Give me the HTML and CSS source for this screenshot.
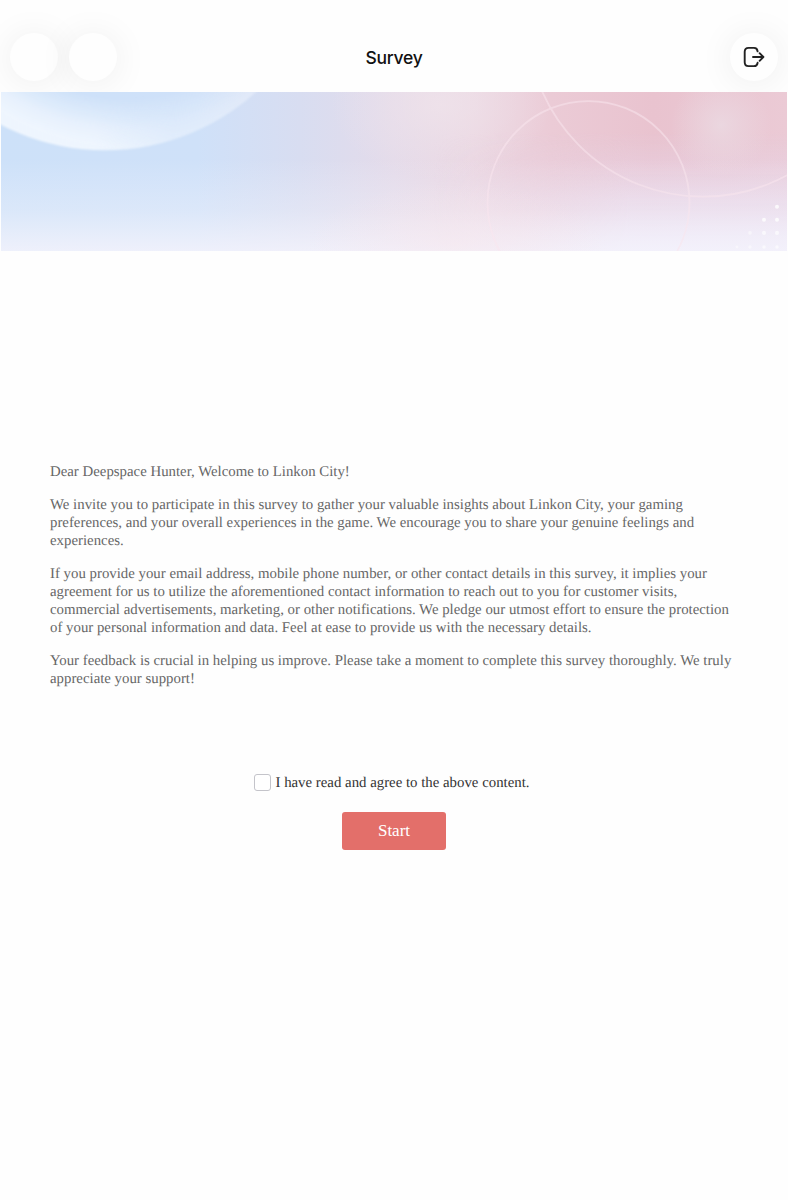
FILE: index.html
```html
<!DOCTYPE html>
<html lang="en">
<head>
    <meta charset="UTF-8">
    <meta name="viewport" content="width=device-width, initial-scale=1.0">
    <title>Survey</title>
    <link rel="stylesheet" href="styles.css">
</head>
<body>
<header class="topbar">
    <div class="nav-left">
        <button type="button" class="round-btn" aria-label="Back"></button>
        <button type="button" class="round-btn" aria-label="Forward"></button>
    </div>
    <h1>Survey</h1>
    <div class="nav-right">
        <button type="button" class="round-btn" aria-label="Exit">
            <svg class="exit-icon" viewBox="0 0 24 24" width="24" height="24">
                <path d="M15.6 6.4C15.4 4.2 14.2 2.9 12 2.9H6.6Q2.7 2.9 2.7 6.8V17.2Q2.7 21.1 6.6 21.1H12C14.2 21.1 15.4 19.8 15.6 17.8"/>
                <path d="M11 12H21.3M17.6 8.2L21.4 12L17.6 15.8"/>
            </svg>
        </button>
    </div>
</header>

<svg class="banner" viewBox="0 0 786 158" preserveAspectRatio="none">
    <defs>
        <linearGradient id="sky" x1="0" x2="1" y1="0" y2="0">
            <stop offset="0" stop-color="#cde1f9"/>
            <stop offset="0.25" stop-color="#cfe1f9"/>
            <stop offset="0.38" stop-color="#d8ddf1"/>
            <stop offset="0.5" stop-color="#e4dbea"/>
            <stop offset="0.6" stop-color="#ebd7e2"/>
            <stop offset="0.7" stop-color="#ebcbd6"/>
            <stop offset="0.83" stop-color="#e9c3cf"/>
            <stop offset="1" stop-color="#ebcad5"/>
        </linearGradient>
        <linearGradient id="lilac" x1="0" x2="0" y1="0" y2="1">
            <stop offset="0.25" stop-color="#e6d3e6" stop-opacity="0"/>
            <stop offset="0.7" stop-color="#e8d8ea" stop-opacity="0.85"/>
            <stop offset="1" stop-color="#ece5f6"/>
        </linearGradient>
        <linearGradient id="fade" x1="0" x2="0" y1="0" y2="1">
            <stop offset="0.42" stop-color="#f4f4fc" stop-opacity="0"/>
            <stop offset="0.75" stop-color="#f4f4fb" stop-opacity="0.35"/>
            <stop offset="1" stop-color="#f4f3fc" stop-opacity="0.85"/>
        </linearGradient>
        <linearGradient id="sideways" x1="0" x2="1" y1="0" y2="0">
            <stop offset="0.55" stop-color="#000"/>
            <stop offset="0.8" stop-color="#fff"/>
        </linearGradient>
        <mask id="rightSide"><rect width="786" height="158" fill="url(#sideways)"/></mask>
        <radialGradient id="bubble" gradientUnits="userSpaceOnUse" cx="125" cy="-186" r="240">
            <stop offset="0.8" stop-color="#f7fbff" stop-opacity="0"/>
            <stop offset="0.93" stop-color="#f7fbff" stop-opacity="0.62"/>
            <stop offset="1" stop-color="#f7fbff" stop-opacity="0.8"/>
        </radialGradient>
        <linearGradient id="rim" gradientUnits="userSpaceOnUse" x1="0" x2="265" y1="0" y2="0">
            <stop offset="0" stop-color="#fff"/>
            <stop offset="0.35" stop-color="#fff"/>
            <stop offset="0.65" stop-color="#999"/>
            <stop offset="1" stop-color="#999"/>
        </linearGradient>
        <mask id="rimMask"><rect width="786" height="158" fill="url(#rim)"/></mask>
        <filter id="soft"><feGaussianBlur stdDeviation="1.2"/></filter>
        <radialGradient id="glow">
            <stop offset="0" stop-color="#ebdce4" stop-opacity="0.75"/>
            <stop offset="0.5" stop-color="#ebdae3" stop-opacity="0.4"/>
            <stop offset="1" stop-color="#ebdae3" stop-opacity="0"/>
        </radialGradient>
        <radialGradient id="paleGlow">
            <stop offset="0" stop-color="#f0e4eb" stop-opacity="0.75"/>
            <stop offset="0.5" stop-color="#f0e4eb" stop-opacity="0.35"/>
            <stop offset="1" stop-color="#f0e4eb" stop-opacity="0"/>
        </radialGradient>
        <radialGradient id="blush">
            <stop offset="0" stop-color="#f8e6ec" stop-opacity="0.45"/>
            <stop offset="1" stop-color="#f8e6ec" stop-opacity="0"/>
        </radialGradient>
    </defs>
    <rect width="786" height="159" fill="url(#sky)"/>
    <ellipse cx="440" cy="12" rx="110" ry="75" fill="url(#paleGlow)"/>
    <rect width="786" height="158" fill="url(#lilac)" mask="url(#rightSide)"/>
    <circle cx="720" cy="33" r="50" fill="url(#glow)"/>
    <g mask="url(#rimMask)">
        <circle cx="104" cy="-168" r="226" fill="url(#bubble)" filter="url(#soft)"/>
    </g>
    <rect width="786" height="158" fill="url(#fade)"/>
    <ellipse cx="455" cy="150" rx="150" ry="60" fill="url(#blush)"/>
    <g fill="none" stroke="#f9e6ee" stroke-width="1.8" opacity="0.55">
        <circle cx="587.5" cy="110" r="101"/>
        <circle cx="702" cy="-72" r="176"/>
    </g>
    <g fill="#fff" opacity="0.8">
        <circle cx="776" cy="114" r="2"/>
        <circle cx="763" cy="127" r="2"/>
        <circle cx="776" cy="127" r="2"/>
        <circle cx="749" cy="140" r="1.8" opacity="0.6"/>
        <circle cx="763" cy="140" r="2" opacity="0.8"/>
        <circle cx="776" cy="140" r="2" opacity="0.8"/>
        <circle cx="736" cy="154" r="1.4" opacity="0.5"/>
        <circle cx="749" cy="154" r="1.6" opacity="0.6"/>
        <circle cx="763" cy="154" r="1.8" opacity="0.7"/>
        <circle cx="776" cy="154" r="1.8" opacity="0.7"/>
    </g>
</svg>

<main class="survey">
    <div class="intro">
        <p>Dear Deepspace Hunter, Welcome to Linkon City!</p>
        <p>We invite you to participate in this survey to gather your valuable insights about Linkon City, your gaming preferences, and your overall experiences in the game. We encourage you to share your genuine feelings and experiences.</p>
        <p>If you provide your email address, mobile phone number, or other contact details in this survey, it implies your agreement for us to utilize the aforementioned contact information to reach out to you for customer visits, commercial advertisements, marketing, or other notifications. We pledge our utmost effort to ensure the protection of your personal information and data. Feel at ease to provide us with the necessary details.</p>
        <p>Your feedback is crucial in helping us improve. Please take a moment to complete this survey thoroughly. We truly appreciate your support!</p>
    </div>
    <label class="agree">
        <input type="checkbox" class="agree-box">
        <span>I have read and agree to the above content.</span>
    </label>
    <button type="button" class="start-btn">Start</button>
</main>
</body>
</html>
```
FILE: styles.css
```css
body {
    margin: 0;
    min-height: 1200px;
    background-color: #fefefe;
    font-family: "Liberation Serif", "Times New Roman", serif;
}

/* Top bar */
.topbar {
    box-sizing: border-box;
    height: 92px;
    padding: 22px 10px 0;
    display: grid;
    grid-template-columns: 1fr auto 1fr;
    align-items: center;
    overflow: hidden;
}

.topbar h1 {
    margin: 0;
    font-family: Inter, sans-serif;
    font-size: 17.5px;
    font-weight: 500;
    letter-spacing: -0.25px;
    color: #111;
}

.nav-left, .nav-right {
    display: flex;
    gap: 11px;
}

.nav-right {
    justify-content: flex-end;
}

.round-btn {
    width: 48px;
    height: 48px;
    padding: 0;
    display: flex;
    align-items: center;
    justify-content: center;
    border: none;
    border-radius: 50%;
    background-color: #fefefe;
    box-shadow: 0 2px 36px rgba(0, 0, 0, 0.07);
}

.exit-icon {
    fill: none;
    stroke: #222;
    stroke-width: 1.9;
    stroke-linecap: round;
    stroke-linejoin: round;
}

.banner {
    display: block;
    width: 786px;
    height: 159px;
    margin: 0 1px;
}

/* Survey text and form */
.survey {
    padding: 212px 50px 0;
    display: flex;
    flex-direction: column;
    align-items: center;
}

.intro {
    width: 100%;
    font-size: 14.83px;
    line-height: 18px;
    color: #666;
    text-rendering: geometricPrecision;
}

.intro p {
    margin: 0 0 15px;
}

.agree {
    margin: 68px 4px 0 0;
    display: flex;
    align-items: center;
    gap: 4px;
    font-size: 14.83px;
    line-height: 20px;
    color: #333;
    text-rendering: geometricPrecision;
}

.agree span {
    padding-top: 2px;
}

.agree-box {
    appearance: none;
    width: 17px;
    height: 17px;
    margin: 0;
    box-sizing: border-box;
    border: 1px solid #c4c4ca;
    border-radius: 3px;
    background-color: #fff;
}

.start-btn {
    width: 104px;
    height: 38px;
    margin-top: 19px;
    border: none;
    border-radius: 3px;
    background-color: #e36f6a;
    color: #fff;
    font-family: inherit;
    font-size: 17px;
}
```
